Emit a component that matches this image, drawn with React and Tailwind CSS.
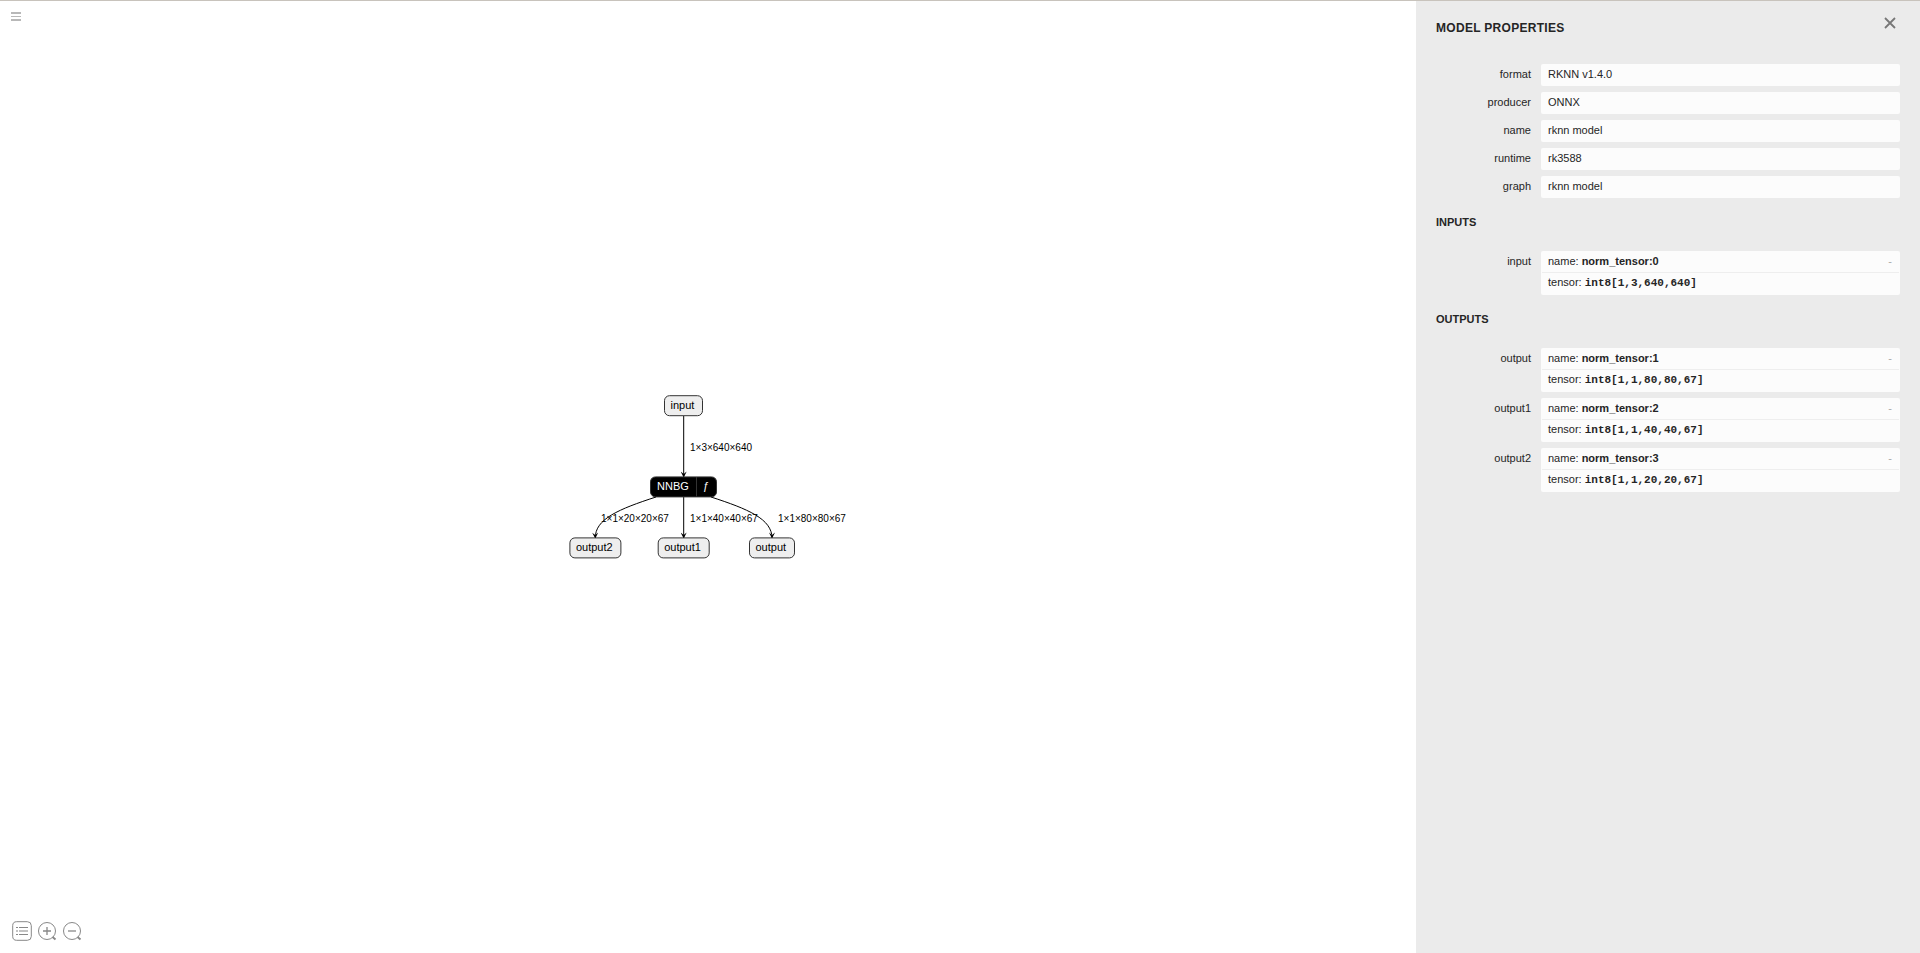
const NODES = [
  { id: 'input', x: 95.5, y: 0.7, width: 38 },
  { id: 'output2', x: 0.9, y: 142.9, width: 51 },
  { id: 'output1', x: 89.2, y: 142.9, width: 51 },
  { id: 'output', x: 180.5, y: 142.9, width: 45 },
];

const EDGES = [
  { d: 'M114.7 21V82', label: '1×3×640×640', x: 121, y: 56 },
  { d: 'M87 102C50 114 26 124 26.3 143', label: '1×1×20×20×67', x: 32, y: 127 },
  { d: 'M114.7 102V143', label: '1×1×40×40×67', x: 121, y: 127 },
  { d: 'M142 102C179 114 203 124 203 143', label: '1×1×80×80×67', x: 209, y: 127 },
];

const PROPERTIES = [
  ['format', 'RKNN v1.4.0'],
  ['producer', 'ONNX'],
  ['name', 'rknn model'],
  ['runtime', 'rk3588'],
  ['graph', 'rknn model'],
];

const INPUTS = [['input', 'norm_tensor:0', 'int8[1,3,640,640]']];

const OUTPUTS = [
  ['output', 'norm_tensor:1', 'int8[1,1,80,80,67]'],
  ['output1', 'norm_tensor:2', 'int8[1,1,40,40,67]'],
  ['output2', 'norm_tensor:3', 'int8[1,1,20,20,67]'],
];

function Graph() {
  return (
    <svg width="278" height="164" viewBox="0 0 278 164" className="overflow-visible">
      <defs>
        <marker id="arrow" viewBox="0 0 10 10" refX="9" refY="5" markerWidth="7" markerHeight="6" markerUnits="userSpaceOnUse" orient="auto">
          <path d="M0 0L10 5L0 10L4 5Z" />
        </marker>
      </defs>
      <g fill="none" stroke="black">
        {EDGES.map((e) => (
          <path key={e.d} d={e.d} markerEnd="url(#arrow)" />
        ))}
      </g>
      <g fill="black" className="text-[10px]">
        {EDGES.map((e) => (
          <text key={e.label} x={e.x} y={e.y}>{e.label}</text>
        ))}
      </g>
      <g fill="black" className="text-[11px]">
        {NODES.map((n) => (
          <g key={n.id}>
            <rect x={n.x} y={n.y} width={n.width} height="20" rx="5" fill="#eeeeee" stroke="#333333" />
            <text x={n.x + 6} y={n.y + 13.1}>{n.id}</text>
          </g>
        ))}
        <rect x="81.5" y="81.9" width="66" height="20" rx="5" fill="black" stroke="#333333" />
        <path d="M127.5 82V101.5" stroke="#333333" />
        <text x="88" y="95" fill="white">NNBG</text>
        <text x="134" y="95" fill="white">ƒ</text>
      </g>
    </svg>
  );
}

function Row({ name, children }) {
  return (
    <div className="flex items-start gap-[10px]">
      <div className="w-[95px] shrink-0 pt-1 text-right leading-3">{name}</div>
      <div className="min-w-0 flex-1 rounded-xs bg-[#fcfcfc]">{children}</div>
    </div>
  );
}

function Tensor({ item: [name, id, type] }) {
  return (
    <Row name={name}>
      <div className="mx-px flex justify-between border-b border-[#eeeeee] pt-1 pr-[7px] pb-[5px] pl-[6px] leading-3">
        <div>name: <b>{id}</b></div>
        <button type="button" aria-label={`Collapse ${name}`} className="leading-3 text-[#aaaaaa]">-</button>
      </div>
      <div className="h-[22px] px-[7px] pt-[3px] leading-3">
        tensor: <b className="font-['Liberation_Mono',monospace]">{type}</b>
      </div>
    </Row>
  );
}

function Section({ title, items }) {
  return (
    <section>
      <h2 className="mt-[18px] mb-[23px] text-[11px] leading-3 font-bold">{title}</h2>
      <div className="flex flex-col gap-[6px]">
        {items.map((item) => (
          <Tensor key={item[0]} item={item} />
        ))}
      </div>
    </section>
  );
}

function Magnifier({ label, d }) {
  return (
    <button type="button" aria-label={label}>
      <svg width="20" height="20" viewBox="0 0 20 20" fill="none" stroke="#888888">
        <circle cx="10" cy="10" r="8.5" />
        <path d={d} strokeWidth="1.3" />
        <path d="M15.5 16L18.5 18.5" strokeWidth="2" />
      </svg>
    </button>
  );
}

export default function App() {
  return (
    <div className="flex min-h-screen border-t border-[#c8c3bc] bg-white font-['Liberation_Sans',Arial,sans-serif] text-[11px] text-[#252525]">
      <div className="relative flex min-w-0 flex-1 items-center justify-center">
        <button type="button" aria-label="Menu" className="absolute top-[10px] left-[11px]">
          <svg width="10" height="11" viewBox="0 0 10 11" fill="#b8b8b8">
            <path d="M0 1h10v2H0zM0 5h10v1H0zM0 8h10v2H0z" />
          </svg>
        </button>
        <Graph />
        <div className="absolute bottom-3 left-3 flex items-center gap-[5px]">
          <button type="button" aria-label="Model properties">
            <svg width="20" height="20" viewBox="0 0 20 20" fill="none" stroke="#888888">
              <rect x="0.7" y="0.7" width="18.6" height="18.6" rx="4" />
              <path d="M7 6.5h9M7 10h9M7 13.5h9M4 6.5h2M4 10h2M4 13.5h2" strokeWidth="1.2" />
            </svg>
          </button>
          <Magnifier label="Zoom in" d="M6 10h8M10 6v8" />
          <Magnifier label="Zoom out" d="M6 10h8" />
        </div>
      </div>
      <aside className="w-[504px] shrink-0 bg-[#ebebeb] px-5">
        <header className="flex items-start justify-between">
          <h1 className="mt-[19px] text-[12px] leading-4 font-bold tracking-wide">MODEL PROPERTIES</h1>
          <button type="button" aria-label="Close" className="mt-4 mr-1">
            <svg width="12" height="12" viewBox="0 0 12 12" stroke="#777777" strokeWidth="1.8">
              <path d="M1 1L11 11M11 1L1 11" />
            </svg>
          </button>
        </header>
        <div className="mt-7 flex flex-col gap-[6px]">
          {PROPERTIES.map(([name, value]) => (
            <Row key={name} name={name}>
              <div className="px-[7px] pt-1 pb-[6px] leading-3">{value}</div>
            </Row>
          ))}
        </div>
        <Section title="INPUTS" items={INPUTS} />
        <Section title="OUTPUTS" items={OUTPUTS} />
      </aside>
    </div>
  );
}
